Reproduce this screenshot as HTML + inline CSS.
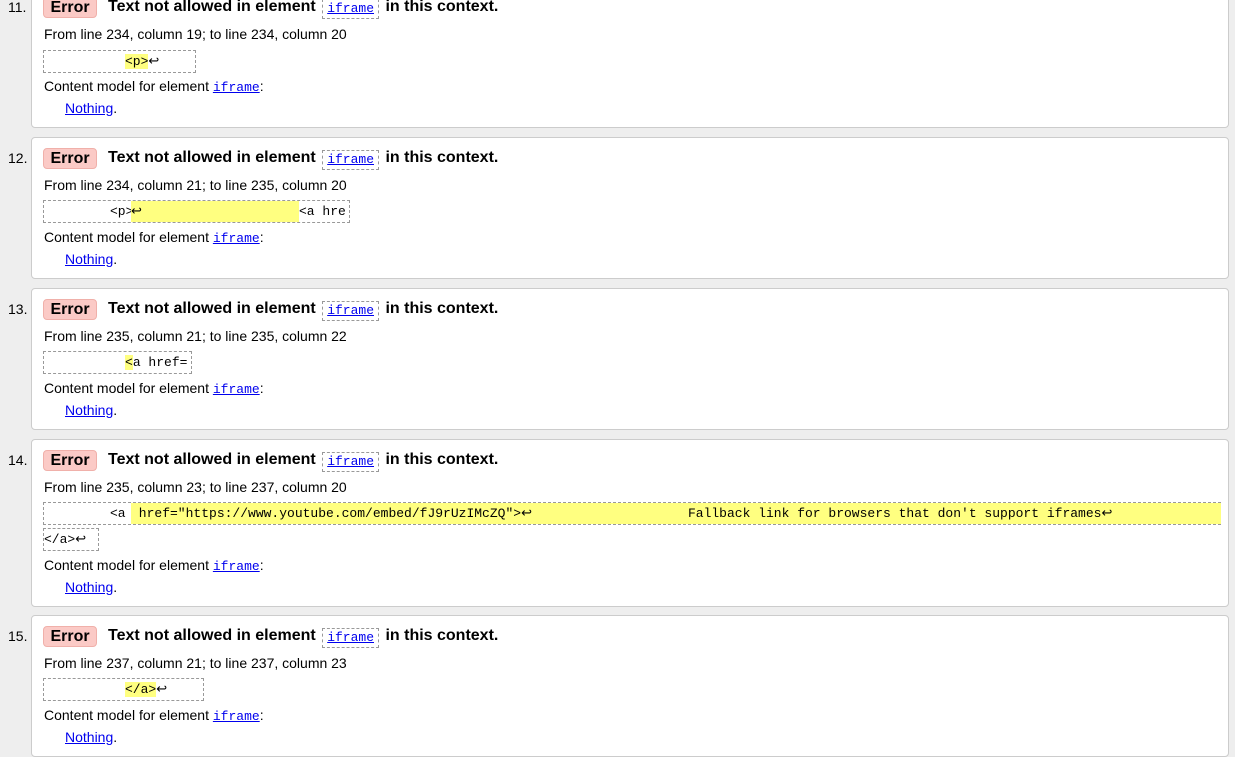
<!DOCTYPE html>
<html><head><meta charset="utf-8"><style>
body{margin:0;background:#eeeeee;font-family:"Liberation Sans",Arial,sans-serif;font-size:14px;color:#000;width:1235px;height:752px;overflow:hidden;position:relative}
.card{position:absolute;left:31px;width:1196px;height:140px;background:#fff;border:1px solid #ccc;border-radius:4px}
.num{position:absolute;left:-24px;top:12px;font-size:14px}
.badge{position:absolute;left:11px;top:10px;width:52px;height:19px;background:#fbcac6;border:1px solid #f0b0aa;border-radius:4px;font-weight:bold;font-size:16px;text-align:center;line-height:19px}
.title{position:absolute;left:76px;top:11px;font-weight:bold;font-size:16px;white-space:nowrap}
.ifr{display:inline-block;border:1px dashed #999;padding:1px 4px 2px;font-family:"Liberation Mono",monospace;font-weight:normal;font-size:13px;color:#00e;text-decoration:underline;margin:0 2px;vertical-align:-1px}
.from{position:absolute;left:12px;top:39px;white-space:nowrap}
.box{position:absolute;left:11px;height:21px;border:1px dashed #999;font-family:"Liberation Mono",monospace;font-size:13px;white-space:pre;line-height:21px}
.box span{position:absolute;top:0}
.hl{background:#ffff80}
.cm a,.no a{color:#00e;text-decoration:underline}
.cm{position:absolute;left:12px;white-space:nowrap}
.cm a{font-family:"Liberation Mono",monospace;font-size:13px}
.no{position:absolute;left:33px}
</style></head><body>

<div class="card" style="top:-14px">
<div class="num">11.</div><div class="badge">Error</div>
<div class="title">Text not allowed in element <span class="ifr">iframe</span> in this context.</div>
<div class="from">From line 234, column 19; to line 234, column 20</div>
<div class="box" style="top:63px;width:151px"><span style="left:81px"><span class="hl" style="position:static">&lt;p&gt;</span>↩</span></div>
<div class="cm" style="top:91px">Content model for element <a>iframe</a>:</div>
<div class="no" style="top:113px"><a>Nothing</a>.</div>
</div>

<div class="card" style="top:137px">
<div class="num">12.</div><div class="badge">Error</div>
<div class="title">Text not allowed in element <span class="ifr">iframe</span> in this context.</div>
<div class="from">From line 234, column 21; to line 235, column 20</div>
<div class="box" style="top:62px;width:305px"><span style="left:66px">&lt;p&gt;</span><span class="hl" style="left:87px;width:168px">↩</span><span style="left:255px">&lt;a hre</span></div>
<div class="cm" style="top:91px">Content model for element <a>iframe</a>:</div>
<div class="no" style="top:113px"><a>Nothing</a>.</div>
</div>

<div class="card" style="top:288px">
<div class="num">13.</div><div class="badge">Error</div>
<div class="title">Text not allowed in element <span class="ifr">iframe</span> in this context.</div>
<div class="from">From line 235, column 21; to line 235, column 22</div>
<div class="box" style="top:62px;width:147px"><span style="left:81px"><span class="hl" style="position:static">&lt;</span>a href=</span></div>
<div class="cm" style="top:91px">Content model for element <a>iframe</a>:</div>
<div class="no" style="top:113px"><a>Nothing</a>.</div>
</div>

<div class="card" style="top:439px;height:166px">
<div class="num">14.</div><div class="badge">Error</div>
<div class="title">Text not allowed in element <span class="ifr">iframe</span> in this context.</div>
<div class="from">From line 235, column 23; to line 237, column 20</div>
<div class="box" style="top:62px;width:1177px;border-right:none"><span style="left:66px">&lt;a</span><span class="hl" style="left:87px;width:1090px"> href="https://www.youtube.com/embed/fJ9rUzIMcZQ"&gt;↩                    Fallback link for browsers that don't support iframes↩</span></div>
<div class="box" style="top:88px;width:54px"><span style="left:0">&lt;/a&gt;↩</span></div>
<div class="cm" style="top:117px">Content model for element <a>iframe</a>:</div>
<div class="no" style="top:139px"><a>Nothing</a>.</div>
</div>

<div class="card" style="top:615px">
<div class="num">15.</div><div class="badge">Error</div>
<div class="title">Text not allowed in element <span class="ifr">iframe</span> in this context.</div>
<div class="from">From line 237, column 21; to line 237, column 23</div>
<div class="box" style="top:62px;width:159px"><span style="left:81px"><span class="hl" style="position:static">&lt;/a&gt;</span>↩</span></div>
<div class="cm" style="top:91px">Content model for element <a>iframe</a>:</div>
<div class="no" style="top:113px"><a>Nothing</a>.</div>
</div>

</body></html>
